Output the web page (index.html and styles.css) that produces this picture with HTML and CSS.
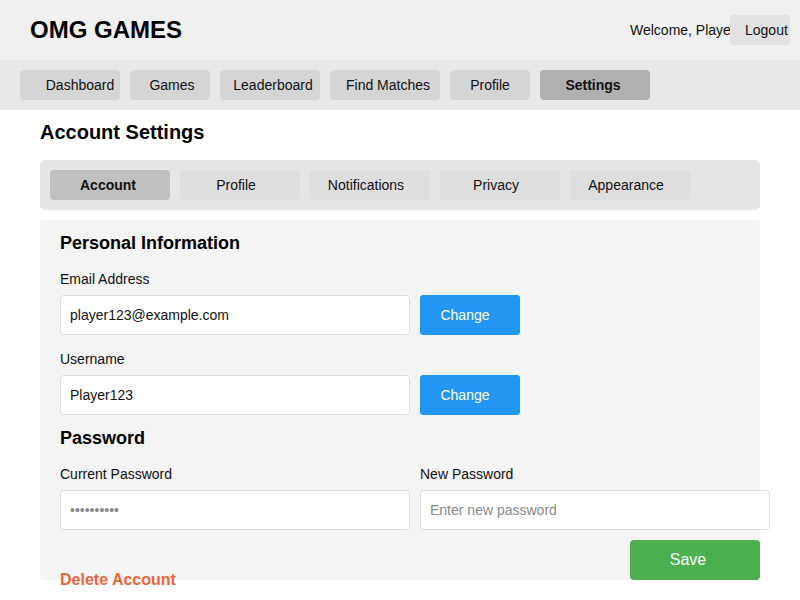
FILE: index.html
```html
<!DOCTYPE html>
<html>
<head>
<meta charset="utf-8">
<link rel="stylesheet" href="styles.css">
</head>
<body>
<header class="topbar">
  <h1 class="logo">OMG GAMES</h1>
  <div class="user">
    <span class="welcome">Welcome, Player123</span>
    <button class="logout">Logout</button>
  </div>
</header>
<nav class="mainnav">
  <a class="navbtn w100 first">Dashboard</a>
  <a class="navbtn w80 games">Games</a>
  <a class="navbtn w100 lead">Leaderboard</a>
  <a class="navbtn w110 lead">Find Matches</a>
  <a class="navbtn w80">Profile</a>
  <a class="navbtn w110 active">Settings</a>
</nav>
<main class="content">
  <h2 class="page-title">Account Settings</h2>
  <div class="tabs">
    <div class="tab active">Account</div>
    <div class="tab">Profile</div>
    <div class="tab">Notifications</div>
    <div class="tab">Privacy</div>
    <div class="tab">Appearance</div>
  </div>
  <section class="panel">
    <h3 class="section-title">Personal Information</h3>
    <label class="label">Email Address</label>
    <div class="field-row">
      <input class="input" type="text" value="player123@example.com">
      <button class="btn-change">Change</button>
    </div>
    <label class="label">Username</label>
    <div class="field-row">
      <input class="input" type="text" value="Player123">
      <button class="btn-change">Change</button>
    </div>
    <h3 class="section-title pw">Password</h3>
    <div class="pw-grid">
      <div class="pw-col">
        <label class="label">Current Password</label>
        <input class="input" type="password" placeholder="••••••••••">
      </div>
      <div class="pw-col">
        <label class="label">New Password</label>
        <input class="input" type="password" placeholder="Enter new password">
      </div>
    </div>
    <div class="actions">
      <span class="delete">Delete Account</span>
      <button class="btn-save">Save</button>
    </div>
  </section>
</main>
</body>
</html>
```

FILE: styles.css
```css
* { box-sizing: border-box; }
html, body { margin: 0; padding: 0; background: #ffffff; }
body {
  font-family: "Liberation Sans", Arial, sans-serif;
  color: #111;
  font-size: 14px;
  min-height: 600px;
}
.topbar {
  height: 60px;
  background: #f0f0f0;
  display: flex;
  align-items: center;
  justify-content: space-between;
  padding: 0 10px 0 30px;
}
.logo {
  margin: 0;
  font-size: 24px;
  font-weight: bold;
  line-height: 28px;
  color: #000;
}
.user { display: flex; align-items: center; }
.welcome {
  width: 100px;
  white-space: nowrap;
  overflow: hidden;
  font-size: 14px;
  line-height: 30px;
  color: #111;
}
.logout {
  width: 60px;
  height: 30px;
  border: none;
  border-radius: 4px;
  background: #e2e2e2;
  font-family: inherit;
  font-size: 14px;
  color: #111;
  padding: 0 0 0 15px;
  text-align: left;
  white-space: nowrap;
}
.mainnav {
  height: 50px;
  background: #e8e8e8;
  display: flex;
  align-items: center;
  gap: 10px;
  padding: 0 20px;
}
.navbtn {
  height: 30px;
  line-height: 30px;
  border-radius: 4px;
  background: #d5d5d5;
  text-align: center;
  font-size: 14px;
  color: #111;
  white-space: nowrap;
}
.navbtn.first { padding-left: 20px; }
.navbtn.games { padding-left: 4px; }
.navbtn.lead { padding-left: 6px; }
.w80 { width: 80px; }
.w100 { width: 100px; }
.w110 { width: 110px; }
.navbtn.active { background: #b0b0b0; font-weight: bold; padding-right: 4px; }
.content { padding: 0 40px; }
.page-title {
  margin: 10px 0 16px;
  font-size: 20px;
  line-height: 24px;
  font-weight: bold;
  color: #000;
}
.tabs {
  height: 50px;
  background: #e6e6e6;
  border-radius: 5px;
  padding: 10px;
  display: flex;
  gap: 10px;
}
.tab {
  width: 120px;
  height: 30px;
  line-height: 30px;
  text-align: center;
  border-radius: 4px;
  background: #dedede;
  font-size: 14px;
  color: #111;
  padding-right: 8px;
}
.tab.active { background: #c0c0c0; font-weight: bold; padding-right: 4px; }
.panel {
  margin-top: 10px;
  height: 360px;
  width: 720px;
  background: #f4f4f4;
  border-radius: 5px;
  padding: 12px 0 0 20px;
}
.section-title {
  margin: 0;
  font-size: 18px;
  line-height: 22px;
  font-weight: bold;
  color: #000;
}
.section-title.pw { margin-top: 12px; }
.label {
  display: block;
  margin: 17px 0 8px;
  font-size: 14px;
  line-height: 16px;
  color: #111;
}
.field-row + .label { margin-top: 16px; }
.field-row { display: flex; gap: 10px; }
.input {
  width: 350px;
  height: 40px;
  border: 1px solid #dcdcdc;
  border-radius: 4px;
  background: #fff;
  padding: 0 10px 0 9px;
  font-family: inherit;
  font-size: 14px;
  color: #111;
  outline: none;
}
.input::placeholder { color: #8a8a8a; }
.btn-change {
  width: 100px;
  height: 40px;
  border: none;
  border-radius: 3px;
  background: #2196f3;
  color: #fff;
  font-family: inherit;
  font-size: 14px;
  padding: 0 10px 0 0;
}
.pw-grid { display: flex; gap: 10px; }
.actions {
  display: flex;
  justify-content: space-between;
  align-items: flex-start;
  margin-top: 10px;
}
.delete {
  display: block;
  margin-top: 30px;
  font-size: 16px;
  line-height: 20px;
  font-weight: bold;
  color: #e8653b;
}
.btn-save {
  width: 130px;
  height: 40px;
  border: none;
  border-radius: 4px;
  background: #4caf50;
  color: #fff;
  font-family: inherit;
  font-size: 16px;
  padding: 0 14px 0 0;
}
```
